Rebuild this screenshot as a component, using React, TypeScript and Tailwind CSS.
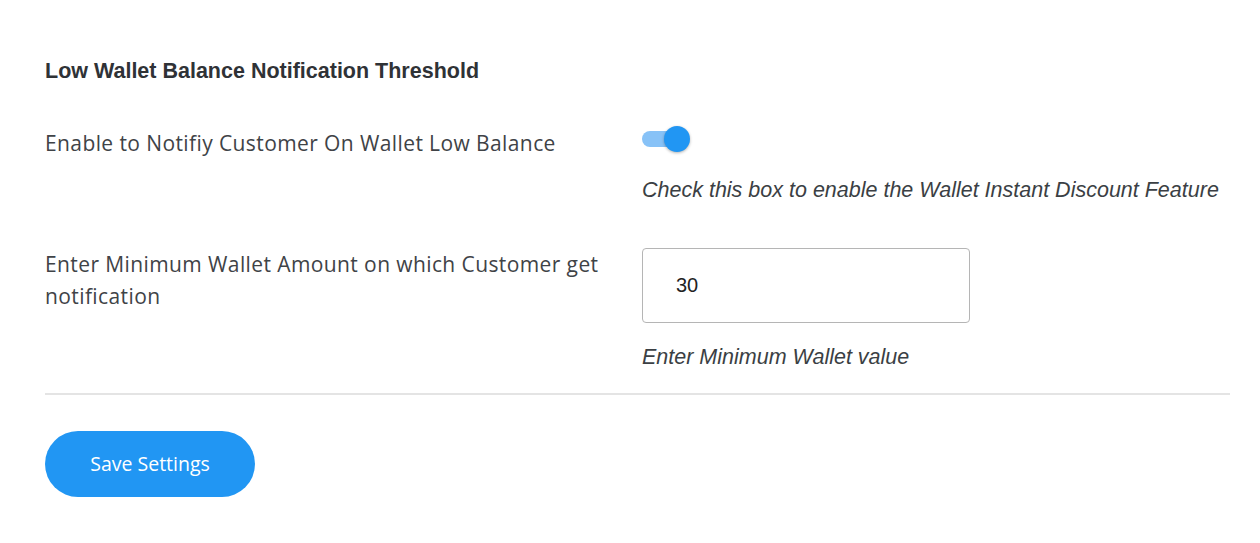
import { useState } from 'react'

// ─── Toggle ───────────────────────────────────────────────────────────────────
function Toggle({ on, onChange }: { on: boolean; onChange: (v: boolean) => void }) {
  return (
    <button
      type="button"
      onClick={() => onChange(!on)}
      className="relative w-[50px] h-[28px] flex items-center"
    >
      <span className={on ? 'block w-[38px] h-[16px] rounded-full bg-[#87c2f7]' : 'block w-[38px] h-[16px] rounded-full bg-[#c4c4c4]'} />
      <span
        className={
          on
            ? 'absolute left-[22px] top-[1px] w-[26px] h-[26px] rounded-full bg-[#2196f3] shadow-[0_1px_3px_rgba(0,0,0,0.3)]'
            : 'absolute left-0 top-[1px] w-[26px] h-[26px] rounded-full bg-[#f5f5f5] shadow-[0_1px_3px_rgba(0,0,0,0.3)]'
        }
      />
    </button>
  )
}

// ─── SettingRow ───────────────────────────────────────────────────────────────
function SettingRow({ label, hint, children }: { label: string; hint: string; children: React.ReactNode }) {
  return (
    <div className="flex">
      <div className="w-[597px] shrink-0 pr-[10px] text-[21px] leading-[32px] tracking-[0.4px] text-[#3f4347] font-['Open_Sans','Lato',sans-serif]">
        {label}
      </div>
      <div className="flex flex-col">
        {children}
        <p className="whitespace-nowrap text-[21.5px] italic text-[#3b3f44] font-['Liberation_Sans',Arial,sans-serif] leading-[24px]">
          {hint}
        </p>
      </div>
    </div>
  )
}

export default function App() {
  const [on, setOn] = useState(true)
  const [amount, setAmount] = useState('30')

  return (
    <div className="w-[1260px] h-[543px] bg-white px-[45px] pt-[58px] overflow-hidden">
      <h2 className="text-[21.5px] leading-[26px] font-bold text-[#2f3236] font-['Liberation_Sans',Arial,sans-serif]">
        Low Wallet Balance Notification Threshold
      </h2>

      <div className="mt-[43px]">
        <SettingRow label="Enable to Notifiy Customer On Wallet Low Balance" hint="Check this box to enable the Wallet Instant Discount Feature">
          <div className="mt-[-2px] mb-[25px]">
            <Toggle on={on} onChange={setOn} />
          </div>
        </SettingRow>
      </div>

      <div className="mt-[46px]">
        <SettingRow label="Enter Minimum Wallet Amount on which Customer get notification" hint="Enter Minimum Wallet value">
          <input
            value={amount}
            onChange={(e) => setAmount(e.target.value)}
            className="w-[328px] h-[75px] border border-[#b5b5b5] rounded-[4px] px-[33px] text-[20px] text-[#222] font-['Liberation_Sans',Arial,sans-serif] outline-none mb-[22px]"
          />
        </SettingRow>
      </div>

      <div className="mt-[24px] h-[2px] bg-[#e4e4e4] w-[1185px]" />

      <button
        type="button"
        className="mt-[36px] w-[210px] h-[66px] rounded-full bg-[#2196f3] text-white text-[19.5px] font-['Open_Sans','Lato',sans-serif]"
      >
        Save Settings
      </button>
    </div>
  )
}
